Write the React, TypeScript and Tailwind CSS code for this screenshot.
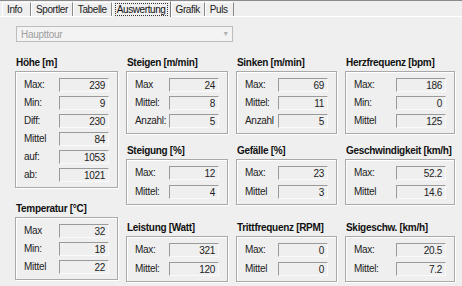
import React from 'react';

type Row = [string, string];

interface GroupProps {
  title: string;
  rows: Row[];
  pitch?: 'tight' | 'wide';
  className?: string;
}

function Group({ title, rows, pitch = 'tight', className }: GroupProps) {
  return (
    <div className={className}>
      <div className="h-[12px] whitespace-nowrap pl-[1px] text-[10px] font-bold leading-[12px] tracking-[-0.3px] text-[#111]">
        {title}
      </div>
      <div className="mt-[2px] border border-[#a9a9a9] px-[8px] pt-[6px] pb-[5px] shadow-[inset_1px_1px_0_#ffffff,1px_1px_0_#ffffff]">
        <div className={pitch === 'wide' ? 'flex flex-col gap-[5px]' : 'flex flex-col gap-[4px]'}>
          {rows.map(([label, value]) => (
            <div key={label} className="flex h-[14px] items-center justify-between">
              <span className="text-[10px] leading-[14px] tracking-[-0.3px] text-[#222]">{label}</span>
              <span className="h-[14px] w-[50px] border border-t-[#9a9a9a] border-l-[#9a9a9a] border-r-[#fafafa] border-b-[#fafafa] pr-[3px] text-right text-[10px] leading-[13px] tracking-[-0.3px] text-[#222]">
                {value}
              </span>
            </div>
          ))}
        </div>
      </div>
    </div>
  );
}

const tabs = ['Info', 'Sportler', 'Tabelle', 'Auswertung', 'Grafik', 'Puls'];

export default function App() {
  return (
    <div
      className="h-[286px] w-[462px] overflow-hidden bg-[#efefef] text-[#111]"
      style={{ fontFamily: '"Liberation Sans", Arial, sans-serif' }}
    >
      {/* tab strip */}
      <div className="h-[1px] bg-[#8a8a8a]" />
      <div className="flex h-[15px] items-end pl-[2px]">
        {tabs.map((t) => {
          const active = t === 'Auswertung';
          return (
            <div
              key={t}
              className={
                active
                  ? 'relative z-10 -mb-[1px] flex h-[16px] items-center border-t border-l border-white border-r border-r-[#7a7a7a] bg-[#efefef] px-[2px] text-[10px] tracking-[-0.4px]'
                  : 'flex h-[14px] min-w-[29px] items-center whitespace-nowrap border-t border-l border-white border-r border-r-[#8a8a8a] px-[4px] text-[10px] tracking-[-0.4px] text-[#222]'
              }
            >
              {active ? (
                <span className="border border-dotted border-[#333] px-[1px] leading-[11px]">{t}</span>
              ) : (
                t
              )}
            </div>
          );
        })}
      </div>
      <div className="h-[1px] bg-white" />

      {/* page */}
      <div className="px-[16px] pt-[9px]">
        <div className="flex h-[16px] w-[217px] items-center justify-between border border-[#bdbdbd] bg-[#f3f3f3] pl-[4px] pr-[3px] text-[10px] tracking-[-0.3px] text-[#a0a0a0]">
          <span>Haupttour</span>
          <span className="text-[7px] text-[#b0b0b0]">▼</span>
        </div>
      </div>

      <div className="mt-[15px] grid grid-cols-[103px_102px_101px_110px] gap-x-[8px] pl-[15px]">
        <div className="flex flex-col">
          <Group
            title="Höhe [m]"
            rows={[
              ['Max:', '239'],
              ['Min:', '9'],
              ['Diff:', '230'],
              ['Mittel', '84'],
              ['auf:', '1053'],
              ['ab:', '1021'],
            ]}
          />
          <Group
            className="mt-[15px]"
            title="Temperatur [°C]"
            rows={[
              ['Max', '32'],
              ['Min:', '18'],
              ['Mittel', '22'],
            ]}
          />
        </div>
        <div className="flex flex-col">
          <Group
            title="Steigen [m/min]"
            rows={[
              ['Max', '24'],
              ['Mittel:', '8'],
              ['Anzahl:', '5'],
            ]}
          />
          <Group
            className="mt-[11px]"
            title="Steigung [%]"
            pitch="wide"
            rows={[
              ['Max:', '12'],
              ['Mittel:', '4'],
            ]}
          />
          <Group
            className="mt-[17px]"
            title="Leistung [Watt]"
            pitch="wide"
            rows={[
              ['Max:', '321'],
              ['Mittel:', '120'],
            ]}
          />
        </div>
        <div className="flex flex-col">
          <Group
            title="Sinken [m/min]"
            rows={[
              ['Max:', '69'],
              ['Mittel:', '11'],
              ['Anzahl', '5'],
            ]}
          />
          <Group
            className="mt-[11px]"
            title="Gefälle [%]"
            pitch="wide"
            rows={[
              ['Max:', '23'],
              ['Mittel', '3'],
            ]}
          />
          <Group
            className="mt-[17px]"
            title="Trittfrequenz [RPM]"
            pitch="wide"
            rows={[
              ['Max:', '0'],
              ['Mittel', '0'],
            ]}
          />
        </div>
        <div className="flex flex-col">
          <Group
            title="Herzfrequenz [bpm]"
            rows={[
              ['Max:', '186'],
              ['Min:', '0'],
              ['Mittel', '125'],
            ]}
          />
          <Group
            className="mt-[11px]"
            title="Geschwindigkeit [km/h]"
            pitch="wide"
            rows={[
              ['Max:', '52.2'],
              ['Mittel', '14.6'],
            ]}
          />
          <Group
            className="mt-[17px]"
            title="Skigeschw. [km/h]"
            pitch="wide"
            rows={[
              ['Max:', '20.5'],
              ['Mittel:', '7.2'],
            ]}
          />
        </div>
      </div>
    </div>
  );
}
